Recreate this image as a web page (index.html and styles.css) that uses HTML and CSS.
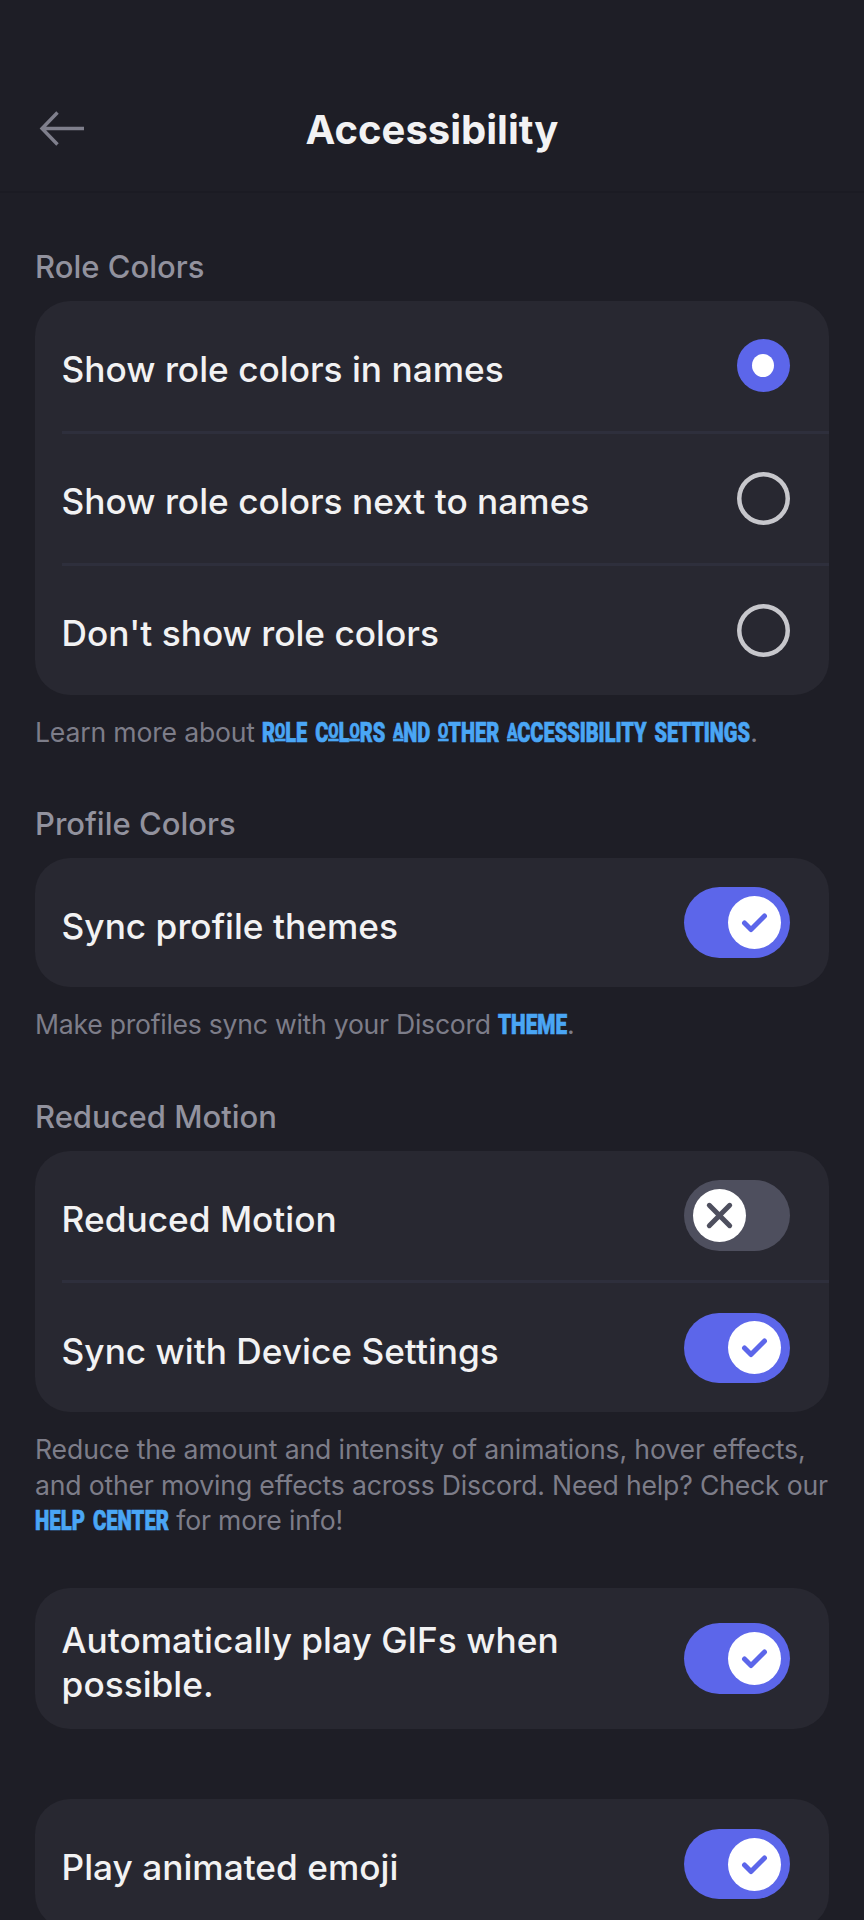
FILE: index.html
```html
<!DOCTYPE html>
<html lang="en">
<head>
<meta charset="utf-8">
<title>Accessibility</title>
<link rel="stylesheet" href="styles.css">
</head>
<body>
<svg class="defs" aria-hidden="true">
  <symbol id="check" viewBox="0 0 53 53"><path d="M16.5 27 L23 33.5 L36.5 20"/></symbol>
  <symbol id="cross" viewBox="0 0 53 53"><path d="M16.3 16.3 L36.7 36.7 M36.7 16.3 L16.3 36.7"/></symbol>
</svg>
<header class="header">
  <svg class="back" viewBox="0 0 48 40"><path d="M47 20.5 H5 M20.5 4.5 L5 20.5 L20.5 36.5"/></svg>
  <h1 class="title">Accessibility</h1>
</header>
<main class="content">
  <section class="section">
    <h2 class="heading">Role Colors</h2>
    <div class="card">
      <div class="row"><span class="label">Show role colors in names</span><span class="radio radio-on"></span></div>
      <div class="row"><span class="label">Show role colors next to names</span><span class="radio"></span></div>
      <div class="row"><span class="label">Don't show role colors</span><span class="radio"></span></div>
    </div>
    <p class="hint">Learn more about <a class="link"><svg width="488" height="30"><text x="0" y="23" textLength="488" lengthAdjust="spacingAndGlyphs">R<tspan class="alt" dy="-4">O</tspan><tspan dy="4">LE C</tspan><tspan class="alt" dy="-4">O</tspan><tspan dy="4">L</tspan><tspan class="alt" dy="-4">O</tspan><tspan dy="4">RS </tspan><tspan class="alt" dy="-4">A</tspan><tspan dy="4">ND </tspan><tspan class="alt" dy="-4">O</tspan><tspan dy="4">THER </tspan><tspan class="alt" dy="-4">A</tspan><tspan dy="4">CCESSIBILITY SETTINGS</tspan></text></svg></a>.</p>
  </section>
  <section class="section">
    <h2 class="heading">Profile Colors</h2>
    <div class="card">
      <div class="row"><span class="label">Sync profile themes</span><span class="switch switch-on"><svg class="knob"><use href="#check"/></svg></span></div>
    </div>
    <p class="hint hint-theme">Make profiles sync with your Discord <a class="link"><svg width="69" height="30"><text x="0" y="23" textLength="69" lengthAdjust="spacingAndGlyphs">THEME</text></svg></a>.</p>
  </section>
  <section class="section section-motion">
    <h2 class="heading">Reduced Motion</h2>
    <div class="card">
      <div class="row"><span class="label">Reduced Motion</span><span class="switch"><svg class="knob"><use href="#cross"/></svg></span></div>
      <div class="row"><span class="label">Sync with Device Settings</span><span class="switch switch-on"><svg class="knob"><use href="#check"/></svg></span></div>
    </div>
    <p class="hint"><span class="hint-wide">Reduce the amount and intensity of animations, hover effects,</span><br>and other moving effects across Discord. Need help? Check our<br><a class="link"><svg width="134" height="30"><text x="0" y="23" textLength="134" lengthAdjust="spacingAndGlyphs">HELP CENTER</text></svg></a> for more info!</p>
  </section>
  <div class="card card-tall">
    <div class="row"><span class="label">Automatically play GIFs when<br>possible.</span><span class="switch switch-on"><svg class="knob"><use href="#check"/></svg></span></div>
  </div>
  <div class="card">
    <div class="row"><span class="label">Play animated emoji</span><span class="switch switch-on"><svg class="knob"><use href="#check"/></svg></span></div>
  </div>
</main>
</body>
</html>
```
FILE: styles.css
```css
* { box-sizing: border-box; }
html { height: 1920px; overflow: hidden; background: #1e1e26; }
body {
  margin: 0;
  height: 1920px;
  overflow: hidden;
  background: #1e1e26;
  color: #f2f2f3;
  font-family: Inter, Roboto, sans-serif;
}
.defs { display: none; }
.header {
  display: grid;
  grid-template-columns: 48px 1fr 48px;
  align-items: center;
  height: 193px;
  padding: 66px 37px 0;
  border-bottom: 2px solid #1b1b23;
}
.back {
  width: 48px;
  height: 40px;
  margin-top: -1px;
  fill: none;
  stroke: #7f7f8c;
  stroke-width: 3.4;
}
.title {
  margin: 0;
  height: 44px;
  line-height: 46px;
  font-size: 40px;
  font-weight: 700;
  text-align: center;
}
.content { padding: 55.8px 35px 0; }
.section { margin-bottom: 55.8px; }
.section-motion { margin-bottom: 50.2px; }
.heading {
  margin: 0 0 16.4px;
  font-size: 31px;
  line-height: 36px;
  font-weight: 500;
  color: #92929e;
}
.card {
  border-radius: 35px;
  background: #282831;
  overflow: hidden;
}
.row {
  display: flex;
  align-items: center;
  justify-content: space-between;
  height: 129.4px;
  margin-left: 26.6px;
  padding-right: 39.4px;
}
.row + .row {
  height: 132px;
  border-top: 3px solid #2e2f3c;
}
.card-tall { margin-bottom: 70.3px; }
.card-tall .row { height: 140.7px; }
.label {
  padding-top: 8px;
  font-size: 35.25px;
  line-height: 44px;
  font-weight: 500;
}
.radio {
  display: flex;
  align-items: center;
  justify-content: center;
  width: 53px;
  height: 53px;
  box-shadow: inset 0 0 0 4.5px #c7c7cc;
  border-radius: 50%;
}
.radio-on { box-shadow: none; background: #5c66ea; }
.radio-on::after {
  content: "";
  width: 22px;
  height: 23px;
  border-radius: 50%;
  background: #fff;
}
.switch {
  display: flex;
  width: 106px;
  height: 70.6px;
  padding: 8.8px 8.8px 8.8px 9.4px;
  border-radius: 36px;
  background: #4e4f5e;
  color: #4e4f5e;
}
.switch-on {
  justify-content: flex-end;
  background: #5c66ea;
  color: #5c66ea;
}
.knob {
  width: 53px;
  height: 53px;
  border-radius: 50%;
  background: #fff;
  fill: none;
  stroke: currentColor;
  stroke-width: 5;
  stroke-linecap: round;
  stroke-linejoin: round;
}
.hint {
  margin: 20px 0 0;
  font-size: 26.6px;
  line-height: 35.3px;
  letter-spacing: -.18px;
  color: #7d7d89;
  white-space: nowrap;
}
.hint-theme { letter-spacing: -.26px; }
.hint-wide { letter-spacing: -.11px; }
.link svg {
  height: 30px;
  margin: -6px 0;
  vertical-align: -1px;
  overflow: visible;
}
.link text {
  fill: #4aa6f5;
  stroke: #4aa6f5;
  stroke-width: .7;
  letter-spacing: 0;
  word-spacing: 4px;
  font: 900 27px Roboto, sans-serif;
}
.link .alt {
  font-size: 20px;
  text-decoration: underline;
  text-decoration-thickness: 3px;
}
```
